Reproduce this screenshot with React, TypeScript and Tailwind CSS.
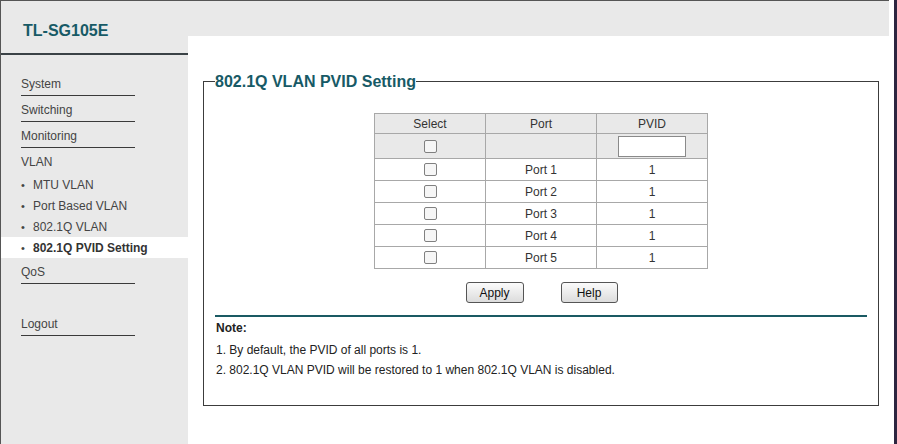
import React from "react";

const font = { fontFamily: '"Liberation Sans", Arial, sans-serif' };

function MainItem({ label }: { label: string }) {
  return (
    <div className="ml-[20px] w-[114px] h-[26px] border-b border-[#3a3a3a] flex items-end pb-[4px]">
      <span className="text-[12px] leading-[14px] text-[#444]">{label}</span>
    </div>
  );
}

function SubItem({ label, active }: { label: string; active?: boolean }) {
  return (
    <div className={`h-[21px] flex items-center pl-[20px] ${active ? "bg-white" : ""}`}>
      <span className="text-[11px] text-[#444] w-[12px] leading-[14px]">•</span>
      <span className={`text-[12px] leading-[14px] ${active ? "font-bold text-[#333]" : "text-[#444]"}`}>{label}</span>
    </div>
  );
}

function Checkbox() {
  return <div className="w-[13px] h-[13px] border border-[#808080] rounded-[2px] bg-[#f6f6f6] mx-auto" />;
}

export default function App() {
  const ports = [1, 2, 3, 4, 5];
  return (
    <div className="w-[897px] h-[444px] flex overflow-hidden bg-white" style={font}>
      <div className="w-[889px] h-[444px] flex border-t border-l border-[#555] bg-[#e9e9e9]">
        {/* Sidebar */}
        <div className="w-[188px] flex flex-col">
          <div className="h-[54px] border-b-2 border-[#3a4246] flex items-center pl-[22px] pt-[6px]">
            <span className="text-[16px] font-bold text-[#175a66] leading-[19px]">TL-SG105E</span>
          </div>
          <div className="mt-[15px] flex flex-col">
            <MainItem label="System" />
            <MainItem label="Switching" />
            <MainItem label="Monitoring" />
            <div className="ml-[20px] h-[26px] flex items-end pb-[5px]">
              <span className="text-[12px] leading-[14px] text-[#444]">VLAN</span>
            </div>
            <SubItem label="MTU VLAN" />
            <SubItem label="Port Based VLAN" />
            <SubItem label="802.1Q VLAN" />
            <SubItem label="802.1Q PVID Setting" active />
            <MainItem label="QoS" />
            <div className="h-[26px]" />
            <MainItem label="Logout" />
          </div>
        </div>
        {/* Content */}
        <div className="flex-1 flex flex-col">
          <div className="h-[35px] bg-[#e9e9e9]" />
          <div className="flex-1 bg-white pl-[15px] pt-[45px] pr-[10px]">
            <div className="relative w-[676px] h-[325px] border border-[#3c3c3c] px-[11px] flex flex-col">
              <span className="absolute left-[11px] top-[-10px] bg-white text-[16px] font-bold leading-[19px] text-[#175a66]">
                802.1Q VLAN PVID Setting
              </span>
              <table className="mt-[31px] mx-auto border-collapse text-[12px] text-[#333] w-[334px]">
                <tbody>
                  <tr className="h-[20px] bg-[#e9e9e9]">
                    <td className="border border-[#a8a8a8] text-center w-[111px] p-0">Select</td>
                    <td className="border border-[#a8a8a8] text-center w-[111px] p-0">Port</td>
                    <td className="border border-[#a8a8a8] text-center w-[111px] p-0">PVID</td>
                  </tr>
                  <tr className="h-[25px] bg-[#e9e9e9]">
                    <td className="border border-[#a8a8a8] p-0"><Checkbox /></td>
                    <td className="border border-[#a8a8a8] p-0"></td>
                    <td className="border border-[#a8a8a8] p-0">
                      <div className="w-[68px] h-[21px] border border-[#8a8a8a] bg-white mx-auto" />
                    </td>
                  </tr>
                  {ports.map((p) => (
                    <tr key={p} className="h-[22px] bg-white">
                      <td className="border border-[#a8a8a8] p-0"><Checkbox /></td>
                      <td className="border border-[#a8a8a8] text-center p-0">Port {p}</td>
                      <td className="border border-[#a8a8a8] text-center p-0">1</td>
                    </tr>
                  ))}
                </tbody>
              </table>
              <div className="mt-[13px] flex justify-center gap-[37px] pl-[1px]">
                <button className="w-[58px] h-[21px] border border-[#555] rounded-[3px] bg-gradient-to-b from-[#fbfbfb] to-[#dcdcdc] text-[12px] text-[#111] leading-[14px]">Apply</button>
                <button className="w-[57px] h-[21px] border border-[#555] rounded-[3px] bg-gradient-to-b from-[#fbfbfb] to-[#dcdcdc] text-[12px] text-[#111] leading-[14px]">Help</button>
              </div>
              <div className="mt-[12px] h-[2px] bg-[#1a5a63]" />
              <div className="text-[12px] leading-[20px] text-[#222] pl-[1px]">
                <div className="font-bold mt-[1px]">Note:</div>
                <div className="mt-[2px]">1. By default, the PVID of all ports is 1.</div>
                <div>2. 802.1Q VLAN PVID will be restored to 1 when 802.1Q VLAN is disabled.</div>
              </div>
            </div>
          </div>
        </div>
      </div>
      <div className="w-[5px] h-[444px] bg-white" />
      <div className="w-[3px] h-[444px] bg-[#2d2540]" />
    </div>
  );
}
